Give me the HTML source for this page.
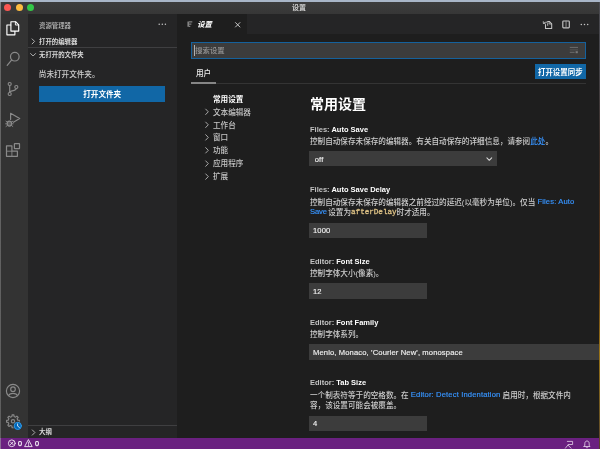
<!DOCTYPE html>
<html lang="zh-CN">
<head>
<meta charset="utf-8">
<title>设置</title>
<style>
html,body{margin:0;padding:0;background:#1e1e1e;}
body{width:600px;height:449px;overflow:hidden;position:relative;font-family:"Liberation Sans","Noto Sans CJK SC",sans-serif;color:#cccccc;-webkit-font-smoothing:antialiased;}
#app{position:absolute;left:0;top:0;width:600px;height:449px;overflow:hidden;background:#1e1e1e;}
.abs{position:absolute;}
.t{position:absolute;white-space:nowrap;line-height:10px;font-size:7.6px;font-weight:500;filter:blur(0.3px);}
.b{font-weight:bold;}
svg{position:absolute;overflow:visible;filter:blur(0.3px);}
.link{color:#3794ff;}
.l{position:relative;top:-1px;letter-spacing:0.15px;-webkit-text-stroke-width:0.18px;}
.h{font-weight:bold;font-size:7.5px;color:#ffffff;}
.h span{color:#c3c3c3;}
.v{color:#f0f0f0;letter-spacing:0.13px;-webkit-text-stroke-width:0.15px;}
.inp{position:absolute;background:#3c3c3c;}
</style>
</head>
<body>
<div id="app">
  <!-- desktop strip / window edges -->
  <div class="abs" id="topstrip" style="left:0;top:0;width:600px;height:2px;background:#a9b6c8;"></div>
  <!-- title bar -->
  <div class="abs" id="titlebar" style="left:0;top:1.7px;width:600px;height:12.5px;background:linear-gradient(#3d3d3d,#373737);"></div>
  <div class="abs" style="left:3.8px;top:4.2px;width:7px;height:7px;border-radius:50%;background:#fc5753;"></div>
  <div class="abs" style="left:15.5px;top:4.2px;width:7px;height:7px;border-radius:50%;background:#fdbc40;"></div>
  <div class="abs" style="left:27.2px;top:4.2px;width:7px;height:7px;border-radius:50%;background:#33c748;"></div>
  <div class="t b" style="left:292px;top:2.6px;font-size:7px;color:#cfcfcf;">设置</div>

  <!-- activity bar -->
  <div class="abs" id="activity" style="left:0;top:14px;width:27.7px;height:423.7px;background:#333333;"></div>
  <div class="abs" id="ledge" style="left:0;top:1.8px;width:1.2px;height:447.2px;background:linear-gradient(#858585 0,#666666 40px,#5e5e5e 435.5px,#8c6c98 436px,#8c6c98 100%);z-index:5;"></div>
  <div class="abs" id="redge" style="left:598.7px;top:1.8px;width:1.3px;height:447.2px;background:linear-gradient(#4a4a50 0,#46464c 60px,#3a2c26 150px,#5a3414 270px,#9a7418 350px,#6a5424 420px,#5a3c30 447px);z-index:5;"></div>

  <!-- sidebar -->
  <div class="abs" id="sidebar" style="left:27.7px;top:14px;width:149.7px;height:423.7px;background:#252526;"></div>
  <div class="t" style="left:39px;top:21px;font-size:6.4px;color:#bbbbbb;">资源管理器</div>
  <div class="t b" style="left:39px;top:37px;font-size:6.4px;color:#d8d8d8;">打开的编辑器</div>
  <div class="abs" style="left:27.7px;top:47.3px;width:149.7px;height:0.7px;background:#3f3f41;"></div>
  <div class="t b" style="left:39px;top:50px;font-size:6.4px;color:#d8d8d8;">无打开的文件夹</div>
  <div class="t" style="left:38.8px;top:70px;color:#cccccc;">尚未打开文件夹。</div>
  <div class="abs" style="left:38.9px;top:86.2px;width:126.6px;height:15.4px;background:#1167a6;"></div>
  <div class="t b" style="left:38.9px;width:126.6px;text-align:center;top:90px;color:#ffffff;">打开文件夹</div>
  <div class="abs" style="left:27.7px;top:424.8px;width:149.7px;height:0.7px;background:#3f3f41;"></div>
  <div class="t b" style="left:39px;top:427.3px;font-size:6.4px;color:#d8d8d8;">大纲</div>

  <!-- tab bar -->
  <div class="abs" id="tabbar" style="left:177.4px;top:14px;width:422.6px;height:20.2px;background:#252526;"></div>
  <div class="abs" id="tab" style="left:177.4px;top:14px;width:69.6px;height:20.2px;background:#1e1e1e;"></div>
  <div class="t b" style="left:197.3px;top:20px;font-size:7.3px;color:#ffffff;font-style:italic;">设置</div>

  <!-- search box -->
  <div class="abs" style="left:190.8px;top:42.3px;width:394.8px;height:16.4px;background:#3c3c3c;box-sizing:border-box;border:1.3px solid #15619c;"></div>
  <div class="t" style="left:195.2px;top:46px;font-size:7.4px;color:#959595;">搜索设置</div>
  <div class="abs" style="left:194px;top:44.8px;width:0.7px;height:11.2px;background:#b0b0b0;"></div>

  <!-- user tab -->
  <div class="t" style="left:196px;top:69px;color:#e7e7e7;">用户</div>
  <div class="abs" style="left:191.3px;top:82.5px;width:394.3px;height:1.4px;background:#343434;"></div>
  <div class="abs" style="left:191.3px;top:82.3px;width:24.7px;height:1.8px;background:#868686;"></div>
  <div class="abs" style="left:535px;top:63.7px;width:50.6px;height:15.7px;background:#1167a6;"></div>
  <div class="t b" style="left:535px;width:50.6px;text-align:center;top:68px;font-size:7.45px;color:#ffffff;">打开设置同步</div>

  <!-- TOC -->
  <div class="t b" style="left:213px;top:95px;color:#ffffff;">常用设置</div>
  <div class="t" style="left:213px;top:108px;color:#c5c5c5;">文本编辑器</div>
  <div class="t" style="left:213px;top:121px;color:#c5c5c5;">工作台</div>
  <div class="t" style="left:213px;top:133px;color:#c5c5c5;">窗口</div>
  <div class="t" style="left:213px;top:146px;color:#c5c5c5;">功能</div>
  <div class="t" style="left:213px;top:159px;color:#c5c5c5;">应用程序</div>
  <div class="t" style="left:213px;top:172px;color:#c5c5c5;">扩展</div>

  <!-- settings body -->
  <div class="t b" style="left:310.1px;top:94px;font-size:14px;line-height:20px;color:#ffffff;">常用设置</div>

  <div class="t h" style="left:310px;top:124.6px;"><span>Files: </span>Auto Save</div>
  <div class="t" style="left:310px;top:137px;color:#cccccc;">控制自动保存未保存的编辑器。有关自动保存的详细信息，请参阅<span class="link">此处</span>。</div>
  <div class="inp" style="left:309.3px;top:151.1px;width:188px;height:15.4px;"></div>
  <div class="t v" style="left:314.7px;top:155px;">off</div>

  <div class="t h" style="left:310px;top:185px;"><span>Files: </span>Auto Save Delay</div>
  <div class="t" style="left:310px;top:198px;color:#cccccc;">控制自动保存未保存的编辑器之前经过的延迟(以毫秒为单位)。仅当 <span class="link l">Files: Auto</span></div>
  <div class="t" style="left:310px;top:208px;color:#cccccc;"><span class="link l" style="letter-spacing:-0.1px;">Save</span><span style="letter-spacing:-0.8px;"> </span>设置为<span class="l" style="letter-spacing:0;-webkit-text-stroke-width:0.3px;font-family:'Liberation Mono','DejaVu Sans Mono',monospace;color:#dcc084;">afterDelay</span>时才适用。</div>
  <div class="inp" style="left:309.3px;top:222.9px;width:117.6px;height:15.4px;"></div>
  <div class="t v" style="left:313px;top:226px;">1000</div>

  <div class="t h" style="left:310px;top:257px;"><span>Editor: </span>Font Size</div>
  <div class="t" style="left:310px;top:269px;color:#cccccc;">控制字体大小(像素)。</div>
  <div class="inp" style="left:309.3px;top:283.4px;width:117.6px;height:15.4px;"></div>
  <div class="t v" style="left:313px;top:287px;">12</div>

  <div class="t h" style="left:310px;top:318px;"><span>Editor: </span>Font Family</div>
  <div class="t" style="left:310px;top:330px;color:#cccccc;">控制字体系列。</div>
  <div class="inp" style="left:309.3px;top:344.4px;width:291px;height:15.4px;"></div>
  <div class="t v" style="left:313px;top:348px;">Menlo, Monaco, 'Courier New', monospace</div>

  <div class="t h" style="left:310px;top:378px;"><span>Editor: </span>Tab Size</div>
  <div class="t" style="left:310px;top:391px;color:#cccccc;">一个制表符等于的空格数。在 <span class="link l">Editor: Detect Indentation</span> 启用时，根据文件内</div>
  <div class="t" style="left:310px;top:401px;color:#cccccc;">容，该设置可能会被覆盖。</div>
  <div class="inp" style="left:309.3px;top:415.9px;width:117.6px;height:15.4px;"></div>
  <div class="t v" style="left:313px;top:419px;">4</div>


  <div class="abs" id="status" style="left:0;top:437.6px;width:600px;height:11.4px;background:#6a2080;"></div>
  <!-- icons -->
  <svg id="icons" width="600" height="449" viewBox="0 0 600 449" style="left:0;top:0;" fill="none" stroke-linecap="round" stroke-linejoin="round">
    <!-- files (active) -->
    <g stroke="#ffffff" stroke-width="1.15">
      <path d="M10.9 31.1V21.7H15.6L18.7 24.8V31.1Z"/>
      <path d="M15.4 21.9V25H18.5" stroke-width="0.9"/>
      <path d="M10.7 25H6.9V34.8H14.9V31.3"/>
    </g>
    <!-- search -->
    <g stroke="#8a8a8a" stroke-width="1.2">
      <circle cx="14.8" cy="56.7" r="4.3"/>
      <path d="M11.7 59.9L7.2 65.4"/>
    </g>
    <!-- source control -->
    <g stroke="#8a8a8a" stroke-width="1.15">
      <circle cx="9.7" cy="84" r="1.55"/>
      <circle cx="9.7" cy="94" r="1.55"/>
      <circle cx="16.3" cy="87" r="1.55"/>
      <path d="M9.7 85.6V92.4"/>
      <path d="M16.3 88.6C16.3 90.9 12.2 90.2 9.9 91.8"/>
    </g>
    <!-- run and debug -->
    <g stroke="#8a8a8a" stroke-width="1.15">
      <path d="M10.6 119.4V113.2L19.7 118.6L13.4 122.3"/>
      <ellipse cx="9.4" cy="123.6" rx="2.2" ry="2.5" fill="#5a5a5a"/>
      <path d="M6 121.2L7.4 122.2M12.8 121.2L11.4 122.2M5.6 123.8H7.1M13.2 123.8H11.7M6 126.5L7.4 125.4M12.8 126.5L11.4 125.4" stroke-width="0.9"/>
    </g>
    <!-- extensions -->
    <g stroke="#8a8a8a" stroke-width="1.2">
      <path d="M6.5 145.9H11.9V151.2H17.4V156.3H6.5Z"/>
      <path d="M6.5 151.2H11.9V156.3" stroke-width="0.9"/>
      <rect x="14.4" y="143.6" width="5.1" height="5.1" rx="0.4"/>
    </g>
    <!-- account -->
    <g stroke="#8a8a8a" stroke-width="1.15">
      <circle cx="13" cy="391" r="6.6"/>
      <circle cx="13" cy="389.2" r="2.3"/>
      <path d="M8.6 395.6C9.6 392.6 16.4 392.6 17.4 395.6"/>
    </g>
    <!-- manage gear -->
    <g stroke="#8a8a8a" stroke-width="1.1">
      <path d="M17.78 420.23L19.44 420.38L19.44 422.22L17.78 422.37L17.14 423.93L18.20 425.20L16.90 426.50L15.63 425.44L14.07 426.08L13.92 427.74L12.08 427.74L11.93 426.08L10.37 425.44L9.10 426.50L7.80 425.20L8.86 423.93L8.22 422.37L6.56 422.22L6.56 420.38L8.22 420.23L8.86 418.67L7.80 417.40L9.10 416.10L10.37 417.16L11.93 416.52L12.08 414.86L13.92 414.86L14.07 416.52L15.63 417.16L16.90 416.10L18.20 417.40L17.14 418.67Z"/>
      <circle cx="13" cy="421.3" r="1.7"/>
    </g>
    <!-- badge -->
    <circle cx="17.8" cy="425.9" r="4.6" fill="#333333" stroke="none"/>
    <circle cx="17.8" cy="425.9" r="3.6" fill="#0066b8" stroke="#2f9ae8" stroke-width="1"/>
    <path d="M17.6 423.9V426.1L19.4 427.4" stroke="#ffffff" stroke-width="0.8"/>

    <!-- sidebar chevrons -->
    <g stroke="#c0c0c0" stroke-width="0.9">
      <path d="M32.1 38.9L34.6 41.4L32.1 43.9"/>
      <path d="M30.6 53.5L33.1 56L35.6 53.5"/>
      <path d="M32.3 429.9L34.9 432.5L32.3 435.1"/>
    </g>
    <!-- sidebar more -->
    <g fill="#c5c5c5" stroke="none">
      <circle cx="159.2" cy="24.2" r="0.75"/><circle cx="162.3" cy="24.2" r="0.75"/><circle cx="165.4" cy="24.2" r="0.75"/>
    </g>
    <!-- tab icon -->
    <g stroke="#9a9a9a" stroke-width="1" stroke-linecap="butt">
      <path d="M188.2 21.4V26.8" stroke-width="1.5" stroke="#8a8a8a"/>
      <path d="M188.9 21.9H192.3M188.9 24.1H191.4M188.9 26.3H190.3"/>
    </g>
    <!-- tab close -->
    <path d="M235.5 22.6L239.9 27M239.9 22.6L235.5 27" stroke="#d8d8d8" stroke-width="0.9"/>
    <!-- editor actions -->
    <g stroke="#c5c5c5" stroke-width="1.05">
      <path d="M545.5 24.6V28.5H551.7V23.8L549.3 21.4H547.6"/>
      <path d="M549.1 21.5V24H551.5" stroke-width="0.8"/>
      <path d="M547.7 25.4V23.6C547.7 22.3 546.6 21.9 545.6 22.3L543.6 23.2" stroke-width="0.9"/>
      <path d="M543.3 21.6V23.4H545.1" stroke-width="0.8"/>
      <rect x="562.8" y="21" width="6.5" height="6.8" rx="0.7" stroke-width="1.15"/>
      <path d="M566.05 21V27.7" stroke-width="0.9" stroke="#a0a0a0"/>
    </g>
    <g fill="#c5c5c5" stroke="none">
      <circle cx="581.3" cy="24.6" r="0.75"/><circle cx="584.5" cy="24.6" r="0.75"/><circle cx="587.7" cy="24.6" r="0.75"/>
    </g>
    <!-- search filter icon -->
    <g stroke="#7a7a7a" stroke-width="0.8" stroke-linecap="butt">
      <path d="M569.8 47.4H578"/>
      <path d="M569.8 49.9H578" stroke="#5c5c5c"/>
      <path d="M569.8 52.3H574.6"/>
      <rect x="575.6" y="51.2" width="2.2" height="2" fill="#7a7a7a" stroke="none"/>
    </g>
    <!-- toc chevrons -->
    <g stroke="#b8b8b8" stroke-width="0.9">
      <path d="M205.7 109.1L208.3 111.8L205.7 114.5"/>
      <path d="M205.7 122.1L208.3 124.8L205.7 127.5"/>
      <path d="M205.7 134.7L208.3 137.4L205.7 140.1"/>
      <path d="M205.7 147.6L208.3 150.3L205.7 153.0"/>
      <path d="M205.7 160.9L208.3 163.6L205.7 166.3"/>
      <path d="M205.7 173.9L208.3 176.6L205.7 179.3"/>
    </g>
    <!-- select chevron -->
    <path d="M486.9 157.8L489.3 160.3L491.7 157.8" stroke="#d8d8d8" stroke-width="1.05"/>
    <!-- status bar icons -->
    <g stroke="#ffffff" stroke-width="0.8">
      <circle cx="11.8" cy="443.3" r="3.4"/>
      <path d="M10.4 441.9L13.2 444.7M13.2 441.9L10.4 444.7"/>
      <path d="M28.6 439.9L32.2 446.6H25Z"/>
      <path d="M28.6 442.2V444.4M28.6 445.3V445.6" stroke-width="0.75"/>
      <path d="M567.3 441.4H572.6V444.5H568.2" stroke="#e6d3ea"/>
      <path d="M565.4 448.2L567.9 445L571 448.2" stroke="#e6d3ea"/>
      <path d="M584 446.5H590L589.2 445.3V443.6C589.2 442 588.2 441 587 441C585.8 441 584.8 442 584.8 443.6V445.3Z" stroke="#ecdcef"/>
      <path d="M586.3 447.6C586.6 448.1 587.4 448.1 587.7 447.6" stroke="#ecdcef"/>
    </g>
  </svg>

  <!-- status bar -->
  <div class="t" style="left:18px;top:438.5px;font-size:7.2px;color:#ffffff;-webkit-text-stroke:0.25px #ffffff;">0</div>
  <div class="t" style="left:35px;top:438.5px;font-size:7.2px;color:#ffffff;-webkit-text-stroke:0.25px #ffffff;">0</div>
</div>
</body>
</html>
